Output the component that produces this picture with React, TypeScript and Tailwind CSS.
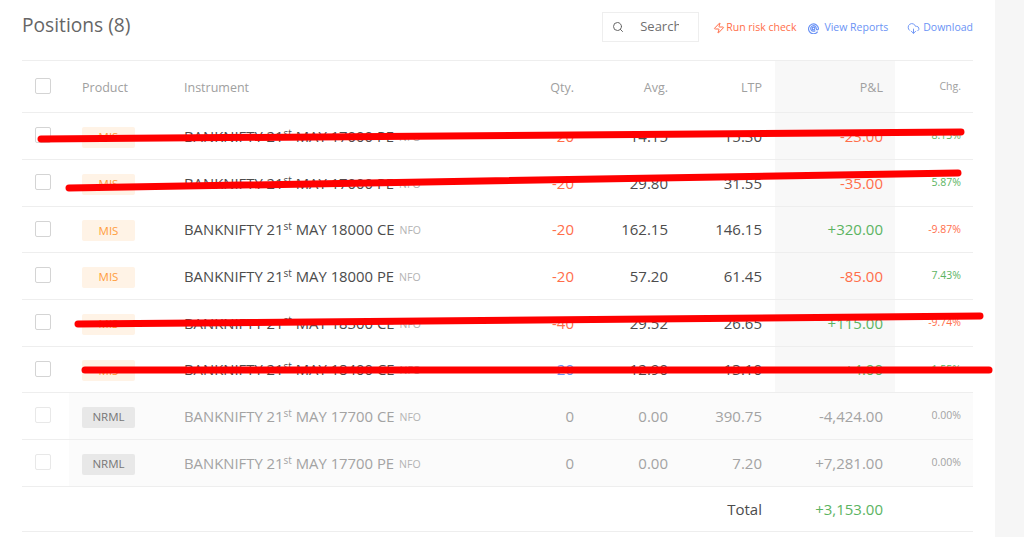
import { CloudDownload, Search, Zap } from "lucide-react";

type Row = {
  product: "MIS" | "NRML";
  strike: string;
  qty: string;
  qtyColor: string;
  avg: string;
  ltp: string;
  pnl: string;
  pnlColor: string;
  chg: string;
  chgColor: string;
  rowClass: string;
};

const LOSS = "text-[#ff6e4a]";
const GAIN = "text-[#5cb462]";
const CLOSED = "text-[#a3a3a3]";

const rows: Row[] = [
  { product: "MIS", strike: "17000 PE", qty: "-20", qtyColor: LOSS, avg: "14.15", ltp: "15.30", pnl: "-23.00", pnlColor: LOSS, chg: "8.13%", chgColor: GAIN, rowClass: "h-[47px]" },
  { product: "MIS", strike: "17000 PE", qty: "-20", qtyColor: LOSS, avg: "29.80", ltp: "31.55", pnl: "-35.00", pnlColor: LOSS, chg: "5.87%", chgColor: GAIN, rowClass: "h-[47px]" },
  { product: "MIS", strike: "18000 CE", qty: "-20", qtyColor: LOSS, avg: "162.15", ltp: "146.15", pnl: "+320.00", pnlColor: GAIN, chg: "-9.87%", chgColor: LOSS, rowClass: "h-[46px]" },
  { product: "MIS", strike: "18000 PE", qty: "-20", qtyColor: LOSS, avg: "57.20", ltp: "61.45", pnl: "-85.00", pnlColor: LOSS, chg: "7.43%", chgColor: GAIN, rowClass: "h-[47px]" },
  { product: "MIS", strike: "18300 CE", qty: "-40", qtyColor: LOSS, avg: "29.52", ltp: "26.65", pnl: "+115.00", pnlColor: GAIN, chg: "-9.74%", chgColor: LOSS, rowClass: "h-[47px]" },
  { product: "MIS", strike: "18400 CE", qty: "20", qtyColor: "text-[#6b93f5]", avg: "12.90", ltp: "13.10", pnl: "+4.00", pnlColor: GAIN, chg: "1.55%", chgColor: GAIN, rowClass: "h-[46px]" },
  { product: "NRML", strike: "17700 CE", qty: "0", qtyColor: CLOSED, avg: "0.00", ltp: "390.75", pnl: "-4,424.00", pnlColor: CLOSED, chg: "0.00%", chgColor: CLOSED, rowClass: "h-[47px]" },
  { product: "NRML", strike: "17700 PE", qty: "0", qtyColor: CLOSED, avg: "0.00", ltp: "7.20", pnl: "+7,281.00", pnlColor: CLOSED, chg: "0.00%", chgColor: CLOSED, rowClass: "h-[47px]" },
];

const gridCols = "grid grid-cols-[47px_115px_316px_87px_94px_94px_120px_78px]";

function PositionRow({ row }: { row: Row }) {
  const closed = row.product === "NRML";
  const plain = closed ? CLOSED : "text-[#4c4c4c]";
  const tint = closed ? "bg-[#fbfbfb]" : "";
  return (
    <div className={`${gridCols} ${row.rowClass} items-stretch border-b border-[#eeeeee] text-[15px]`}>
      <div className="flex items-center pl-[13px] pb-[2px]">
        <span className={`w-4 h-4 rounded-[2px] border bg-white ${closed ? "border-[#e8e8e8]" : "border-[#d4d4d4]"}`} />
      </div>
      <div className={`flex items-center pl-[13px] pt-[2px] ${tint}`}>
        {closed ? (
          <span className="w-[53px] h-[21px] rounded-[2px] bg-[#e8e8e8] text-[#777777] text-[11.5px] flex items-center justify-center">NRML</span>
        ) : (
          <span className="w-[53px] h-[21px] rounded-[2px] bg-[#fff3e6] text-[#ff9d3c] text-[11.5px] flex items-center justify-center">MIS</span>
        )}
      </div>
      <div className={`flex items-center whitespace-nowrap ${plain} ${tint}`}>
        <span className="text-[14.85px]">
          BANKNIFTY 21<sup className="text-[10px]">st</sup> MAY {row.strike}
        </span>
        <span className="ml-[5px] mt-[3px] text-[10.5px] text-[#b3b3b3]">NFO</span>
      </div>
      <div className={`flex items-center justify-end pr-[13px] ${row.qtyColor} ${tint}`}>{row.qty}</div>
      <div className={`flex items-center justify-end pr-[13px] ${plain} ${tint}`}>{row.avg}</div>
      <div className={`flex items-center justify-end pr-[13px] ${plain} ${tint}`}>{row.ltp}</div>
      <div className={`flex items-center justify-end pr-[12px] ${row.pnlColor} ${closed ? "bg-[#fbfbfb]" : "bg-[#f8f8f8]"}`}>{row.pnl}</div>
      <div className={`flex items-center justify-end pr-[12px] text-[10.5px] ${row.chgColor} ${tint}`}>{row.chg}</div>
    </div>
  );
}

export default function App() {
  return (
    <div className="relative h-[537px] w-[1024px] overflow-hidden bg-[#f6f6f6] font-['Open_Sans',sans-serif]">
      <div className="w-[995px] h-full bg-white pl-[22px] pr-[22px]">
        {/* header */}
        <div className="h-[60px] flex items-start">
          <h1 className="text-[19.2px] leading-none mt-[15px] text-[#666666]">Positions (8)</h1>
          <div className="ml-auto flex items-center mt-[12px] h-[30px]">
            <div className="w-[97px] h-[30px] border border-[#eeeeee] flex items-center overflow-hidden pl-[9px] text-[#666666]">
              <Search size={12} strokeWidth={2} className="shrink-0" />
              <input placeholder="Search" className="ml-[16px] w-[39px] bg-transparent text-[13px] outline-none placeholder:text-[#6f6f6f]" />
            </div>
            <span className="ml-[14px] pt-[2px] flex items-center text-[10.5px] text-[#ff6e4a]">
              <Zap size={12} strokeWidth={2} className="mr-[1px]" />
              Run risk check
            </span>
            <span className="ml-[12px] pt-[2px] flex items-center text-[10.5px] text-[#6b93f5]">
              <svg width="11" height="11" viewBox="0 0 12 12" fill="none" stroke="currentColor" strokeWidth="1.3" className="mr-[5px]">
                <path d="M10.5 9.4A5.4 5.4 0 1 1 11.4 6c0 .9-.5 1.4-1.1 1.4S9 6.9 9 6a3 3 0 1 0-1 2.2" />
                <circle cx="6" cy="6" r="1.4" />
              </svg>
              View Reports
            </span>
            <span className="ml-[19px] pt-[2px] flex items-center text-[10.5px] text-[#6b93f5]">
              <CloudDownload size={13} strokeWidth={1.75} className="mr-[3px]" />
              Download
            </span>
          </div>
        </div>

        {/* table head */}
        <div className={`${gridCols} h-[53px] items-stretch border-y border-[#eeeeee] text-[12.5px] text-[#a0a0a0]`}>
          <div className="flex items-center pl-[13px] pb-[2px]">
            <span className="w-4 h-4 rounded-[2px] border border-[#d4d4d4] bg-white" />
          </div>
          <div className="flex items-center pl-[13px] pt-[3px]">Product</div>
          <div className="flex items-center pt-[3px]">Instrument</div>
          <div className="flex items-center justify-end pr-[13px] pt-[3px]">Qty.</div>
          <div className="flex items-center justify-end pr-[13px] pt-[3px]">Avg.</div>
          <div className="flex items-center justify-end pr-[13px] pt-[3px]">LTP</div>
          <div className="flex items-center justify-end pr-[12px] pt-[3px] bg-[#f8f8f8]">P&amp;L</div>
          <div className="flex items-center justify-end pr-[12px] text-[10.5px]">Chg.</div>
        </div>

        {rows.map((row, i) => (
          <PositionRow key={i} row={row} />
        ))}

        {/* total */}
        <div className={`${gridCols} h-[45px] items-stretch border-b border-[#eeeeee] text-[15px]`}>
          <div className="col-span-5 col-start-2 flex items-center justify-end pr-[13px] text-[#4c4c4c]">Total</div>
          <div className={`flex items-center justify-end pr-[12px] ${GAIN}`}>+3,153.00</div>
        </div>
      </div>

      {/* red marker strokes drawn over the table */}
      <svg width="1024" height="537" className="absolute left-0 top-0 pointer-events-none" fill="none" stroke="#ff0000" strokeWidth="7" strokeLinecap="round">
        <path d="M41 139 L961 132" />
        <path d="M69 188 L958 173" />
        <path d="M78 324 L980 316" />
        <path d="M85 370 L989 370" />
      </svg>
    </div>
  );
}
